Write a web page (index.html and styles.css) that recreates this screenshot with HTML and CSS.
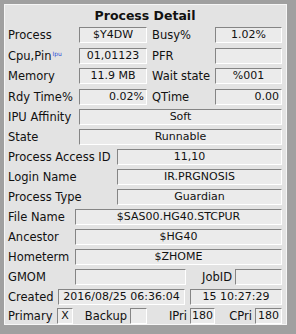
FILE: index.html
```html
<!DOCTYPE html>
<html lang="en">
<head>
  <meta charset="UTF-8" />
  <title>Process Detail</title>
  <link rel="stylesheet" href="styles.css">
</head>
<body>

  <div class="panel">
    <div class="title">Process Detail</div>

    <div class="row r-pair">
      <span class="lbl">Process</span><span class="fld">$Y4DW</span>
      <span class="lbl lbl2">Busy%</span><span class="fld">1.02%</span>
    </div>
    <div class="row r-pair loose">
      <span class="lbl">Cpu,Pin<sup class="ipu">Ipu</sup></span><span class="fld">01,01123</span>
      <span class="lbl lbl2">PFR</span><span class="fld"></span>
    </div>
    <div class="row r-pair">
      <span class="lbl">Memory</span><span class="fld">11.9 MB</span>
      <span class="lbl lbl2">Wait state</span><span class="fld">%001</span>
    </div>
    <div class="row r-pair loose">
      <span class="lbl">Rdy Time%</span><span class="fld right">0.02%</span>
      <span class="lbl lbl2">QTime</span><span class="fld right">0.00</span>
    </div>
    <div class="row r-wide">
      <span class="lbl">IPU Affinity</span><span class="fld">Soft</span>
    </div>
    <div class="row r-wide">
      <span class="lbl">State</span><span class="fld">Runnable</span>
    </div>
    <div class="row r-long">
      <span class="lbl">Process Access ID</span><span class="fld shift">11,10</span>
    </div>
    <div class="row r-long">
      <span class="lbl">Login Name</span><span class="fld">IR.PRGNOSIS</span>
    </div>
    <div class="row r-long">
      <span class="lbl">Process Type</span><span class="fld">Guardian</span>
    </div>
    <div class="row r-mid">
      <span class="lbl">File Name</span><span class="fld">$SAS00.HG40.STCPUR</span>
    </div>
    <div class="row r-mid">
      <span class="lbl">Ancestor</span><span class="fld">$HG40</span>
    </div>
    <div class="row r-mid">
      <span class="lbl">Hometerm</span><span class="fld">$ZHOME</span>
    </div>
    <div class="row r-gmom">
      <span class="lbl">GMOM</span><span class="fld"></span>
      <span class="lbl lbl-r">JobID</span><span class="fld"></span>
    </div>
    <div class="row r-created">
      <span class="lbl">Created</span><span class="fld">2016/08/25 06:36:04</span>
      <span></span><span class="fld">15 10:27:29</span>
    </div>
    <div class="row r-flags tight">
      <span class="lbl">Primary</span><span class="fld box">X</span>
      <span class="lbl lbl-r">Backup</span><span class="fld box"></span>
      <span class="lbl lbl-r">IPri</span><span class="fld box">180</span>
      <span class="lbl lbl-r">CPri</span><span class="fld box">180</span>
    </div>
  </div>

</body>
</html>
```

FILE: styles.css
```css
body {
  margin: 0;
  background-color: #a0a0a0;
  font-family: "DejaVu Sans", Verdana, sans-serif;
  font-size: 11px;
  color: #111;
}

.panel {
  box-sizing: border-box;
  width: 283px;
  height: 321px;
  margin: 4px 0 0 4px;
  padding: 0 4px 0 3px;
  background-color: #e3e3e3;
  border: 1px solid #f6f6f6;
}

.title {
  height: 22px;
  line-height: 22px;
  text-align: center;
  font-weight: bold;
  font-size: 12.5px;
}

.row {
  display: grid;
  height: 16px;
  margin-top: 4px;
  align-items: center;
}

.title + .row {
  margin-top: 0;
}

.row.loose {
  margin-top: 5px;
}

.row.tight {
  margin-top: 3px;
}

.r-pair {
  grid-template-columns: 71px 68px 68px 67px;
}

.r-wide {
  grid-template-columns: 71px 1fr;
}

.r-long {
  grid-template-columns: 109px 1fr;
}

.r-mid {
  grid-template-columns: 67px 1fr;
}

.r-gmom {
  grid-template-columns: 67px 111px 49px 1fr;
}

.r-created {
  grid-template-columns: 50px 127px 5px 1fr;
}

.r-flags {
  grid-template-columns: 49px 16px 57px 17px 43px 25px 40px 27px;
}

.lbl {
  white-space: nowrap;
  line-height: 16px;
  font-size: 11.5px;
}

.lbl2 {
  padding-left: 5px;
}

.lbl-r {
  text-align: right;
  padding-right: 3px;
}

.ipu {
  position: relative;
  top: -4px;
  vertical-align: baseline;
  line-height: 0;
  font-size: 6px;
  color: #2a4fd6;
  margin-left: 1px;
}

.fld {
  box-sizing: border-box;
  height: 16px;
  line-height: 14px;
  background-color: #ebebeb;
  border: 1px solid;
  border-color: #858585 #ffffff #ffffff #858585;
  text-align: center;
  white-space: nowrap;
  overflow: hidden;
}

.fld.right {
  text-align: right;
  padding-right: 2px;
}

.fld.shift {
  padding-right: 20px;
}

.box {
  padding: 0 1px;
}
```
